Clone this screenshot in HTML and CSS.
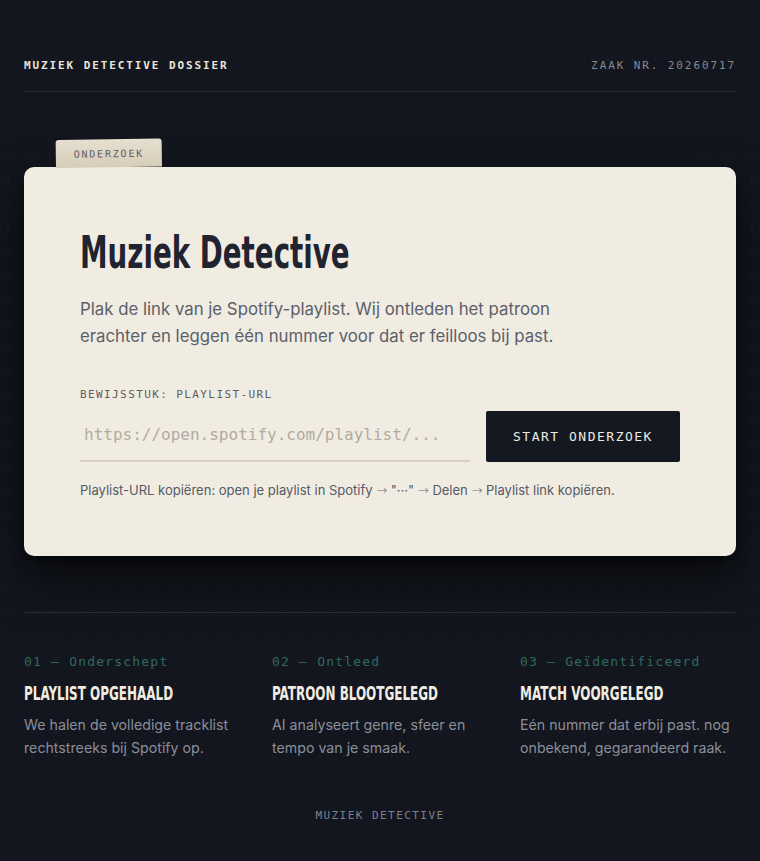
FILE: index.html
```html
<!DOCTYPE html>
<html lang="nl">
<head>
  <meta charset="UTF-8">
  <meta name="viewport" content="width=device-width, initial-scale=1.0">
  <title>Muziek Detective</title>
  <link rel="stylesheet" href="styles.css">
</head>
<body>
  <header class="topbar">
    <span class="brand">MUZIEK DETECTIVE DOSSIER</span>
    <span class="case-nr">ZAAK NR. 20260717</span>
  </header>

  <main class="dossier">
    <div class="tab">ONDERZOEK</div>
    <section class="card">
      <h1 class="title"><span>Muziek Detective</span></h1>
      <p class="intro">Plak de link van je Spotify-playlist. Wij ontleden het patroon erachter en leggen één nummer voor dat er feilloos bij past.</p>

      <form class="search" onsubmit="return false">
        <label class="field-label" for="url">BEWIJSSTUK: PLAYLIST-URL</label>
        <div class="field-row">
          <input class="url-input" id="url" type="text" placeholder="https://open.spotify.com/playlist/...">
          <button class="start-btn" type="submit">START ONDERZOEK</button>
        </div>
        <p class="hint">Playlist-URL kopiëren: open je playlist in Spotify <span class="arr">→</span> "···" <span class="arr">→</span> Delen <span class="arr">→</span> Playlist link kopiëren.</p>
      </form>
    </section>
  </main>

  <section class="steps">
    <div class="step">
      <div class="step-nr">01 — Onderschept</div>
      <h3><span>PLAYLIST OPGEHAALD</span></h3>
      <p>We halen de volledige tracklist rechtstreeks bij Spotify op.</p>
    </div>
    <div class="step">
      <div class="step-nr">02 — Ontleed</div>
      <h3><span>PATROON BLOOTGELEGD</span></h3>
      <p>AI analyseert genre, sfeer en tempo van je smaak.</p>
    </div>
    <div class="step">
      <div class="step-nr">03 — Geïdentificeerd</div>
      <h3><span>MATCH VOORGELEGD</span></h3>
      <p>Eén nummer dat erbij past. nog onbekend, gegarandeerd raak.</p>
    </div>
  </section>

  <footer class="footer">MUZIEK DETECTIVE</footer>
</body>
</html>
```

FILE: styles.css
```css
:root {
  --bg: #13161e;
  --paper: #f1ece2;
  --ink: #1f2430;
  --line: #2a2e39;
  --muted: #8a8f9a;
  --green: #2f6b5e;
  --mono: "DejaVu Sans Mono", "Liberation Mono", monospace;
  --narrow: "DejaVu Sans Condensed", "DejaVu Sans", sans-serif;
}
* {
  box-sizing: border-box;
}
body {
  margin: 0;
  padding: 0 24px;
  min-height: 100vh;
  background-color: var(--bg);
  background-image: radial-gradient(circle, rgba(255,255,255,0.05) 1px, transparent 1.2px);
  background-size: 24px 24px;
  background-position: -4px 0;
  color: var(--paper);
  font-family: "Inter", sans-serif;
}

/* kop */
.topbar {
  display: flex;
  justify-content: space-between;
  align-items: center;
  padding: 59px 0 18px;
  line-height: 14px;
  border-bottom: 1px solid var(--line);
  font-family: var(--mono);
  font-size: 11px;
  letter-spacing: 1.9px;
}
.brand {
  font-weight: bold;
  color: #e9e5dc;
}
.case-nr {
  color: #858a95;
}

/* dossiermap */
.dossier {
  padding-top: 48px;
}
.tab {
  display: inline-block;
  margin-left: 32px;
  padding: 9px 0 0;
  width: 106px;
  height: 28px;
  text-align: center;
  background: linear-gradient(#e6dfd0, #d6cdb9);
  border-radius: 3px 3px 0 0;
  transform: rotate(-0.8deg);
  transform-origin: left bottom;
  font-family: var(--mono);
  font-size: 10px;
  letter-spacing: 1.8px;
  color: #5d5d62;
}
.card {
  margin-top: -1px;
  background: var(--paper);
  border-radius: 10px;
  padding: 60px 56px 56px;
  box-shadow: 0 24px 50px rgba(0,0,0,0.55), 0 6px 14px rgba(0,0,0,0.35);
  color: var(--ink);
}
/* smalle koppen: de letter wordt horizontaal samengedrukt */
.title {
  margin: 0;
  font-family: var(--narrow);
  font-weight: bold;
  font-size: 44px;
  line-height: 52px;
  color: #1f2430;
  white-space: nowrap;
}
.title span,
.step h3 span {
  display: inline-block;
  transform: scaleX(0.7);
  transform-origin: left center;
}
.intro {
  margin: 17px 0 0;
  max-width: 490px;
  font-size: 16.8px;
  line-height: 27px;
  color: #5a5f6a;
}
.search {
  margin-top: 38px;
}
.field-label {
  display: block;
  font-family: var(--mono);
  font-size: 11px;
  letter-spacing: 1.4px;
  color: #5c5c5e;
}
.field-row {
  display: flex;
  align-items: flex-start;
  gap: 16px;
  margin-top: 10px;
}
.url-input {
  width: 390px;
  height: 51px;
  padding: 0 4px 2px;
  border: none;
  border-bottom: 2px solid #d9d0be;
  background: transparent;
  font-family: var(--mono);
  font-size: 16px;
  color: var(--ink);
  outline: none;
}
.url-input::placeholder {
  color: #b1ab9f;
}
.start-btn {
  width: 194px;
  height: 51px;
  border: none;
  border-radius: 2px;
  background: #141820;
  color: #eeeae2;
  font-family: var(--mono);
  font-size: 13px;
  letter-spacing: 1.5px;
  cursor: pointer;
}
.hint {
  margin: 19px 0 0;
  font-size: 13px;
  line-height: 18px;
  color: #545a66;
}
.arr {
  font-family: "DejaVu Sans", sans-serif;
  font-weight: 200;
  color: #6a6f7a;
}

/* stappen */
.steps {
  display: grid;
  grid-template-columns: repeat(3, minmax(0, 1fr));
  gap: 32px;
  margin-top: 56px;
  padding-top: 41px;
  border-top: 1px solid var(--line);
}
.step-nr {
  font-family: var(--mono);
  font-size: 13px;
  letter-spacing: 1.2px;
  color: var(--green);
}
.step h3 {
  margin: 12px 0 0;
  font-family: var(--narrow);
  font-weight: bold;
  font-size: 19px;
  line-height: 24px;
  color: var(--paper);
  white-space: nowrap;
}
.step p {
  margin: 8px 0 0;
  font-size: 14.2px;
  line-height: 23px;
  color: var(--muted);
}

.footer {
  padding: 50px 0 40px;
  text-align: center;
  font-family: var(--mono);
  font-size: 11px;
  letter-spacing: 1.45px;
  color: #7b808b;
}
```
